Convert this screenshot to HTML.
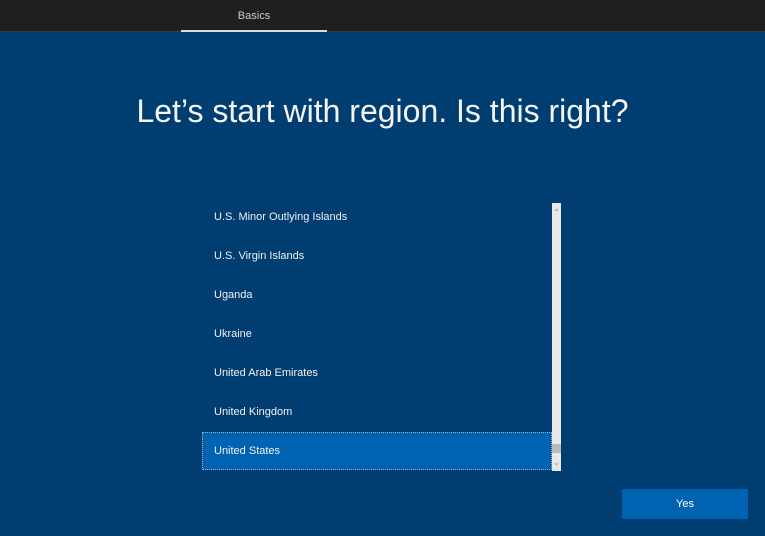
<!DOCTYPE html>
<html><head><style>
body{margin:0;width:765px;height:536px;overflow:hidden;background:#003e72;font-family:"Liberation Sans",sans-serif;position:relative;color:#fff}
.top{position:absolute;left:0;top:0;width:765px;height:31px;background:#1f1f1f}
.tab{position:absolute;left:181px;top:10px;width:146px;text-align:center;font-size:11px;color:#ccc}
.ul{position:absolute;left:181px;top:30px;width:146px;height:2px;background:#ddd}
.line{position:absolute;left:0;top:31px;width:765px;height:1px;background:#3a3a3a}
h1{position:absolute;left:0;top:93px;width:765px;margin:0;text-align:center;font-weight:300;font-size:32px;letter-spacing:0;color:#f4f4f4}
.item{position:absolute;left:214px;font-size:11px;color:#f0f0f0}
.sel{position:absolute;left:202px;top:432px;width:350px;height:38px;background:#0063b1;border:1px dotted #aaa;box-sizing:border-box}
.sb{position:absolute;left:552px;top:203px;width:9px;height:268px;background:#e8e8e8}
.thumb{position:absolute;left:552px;top:444px;width:9px;height:9px;background:#bbb}
.btn{position:absolute;left:622px;top:489px;width:126px;height:30px;background:#0063b1;text-align:center;line-height:31px;font-size:11px}
</style></head><body>
<div class="top"><div class="tab">Basics</div></div>
<div class="line"></div><div class="ul"></div>
<h1>Let’s start with region. Is this right?</h1>
<div class="sel"></div>
<div class="item" style="top:211px">U.S. Minor Outlying Islands</div>
<div class="item" style="top:250px">U.S. Virgin Islands</div>
<div class="item" style="top:289px">Uganda</div>
<div class="item" style="top:328px">Ukraine</div>
<div class="item" style="top:367px">United Arab Emirates</div>
<div class="item" style="top:406px">United Kingdom</div>
<div class="item" style="top:445px">United States</div>
<div class="sb"></div><div class="thumb"></div>
<svg style="position:absolute;left:552px;top:203px" width="9" height="268"><path d="M3 8L4.5 6L6 8" stroke="#999" fill="none" stroke-width="0.8"/><path d="M3 260L4.5 262L6 260" stroke="#999" fill="none" stroke-width="0.8"/></svg>
<div class="btn">Yes</div>
</body></html>
